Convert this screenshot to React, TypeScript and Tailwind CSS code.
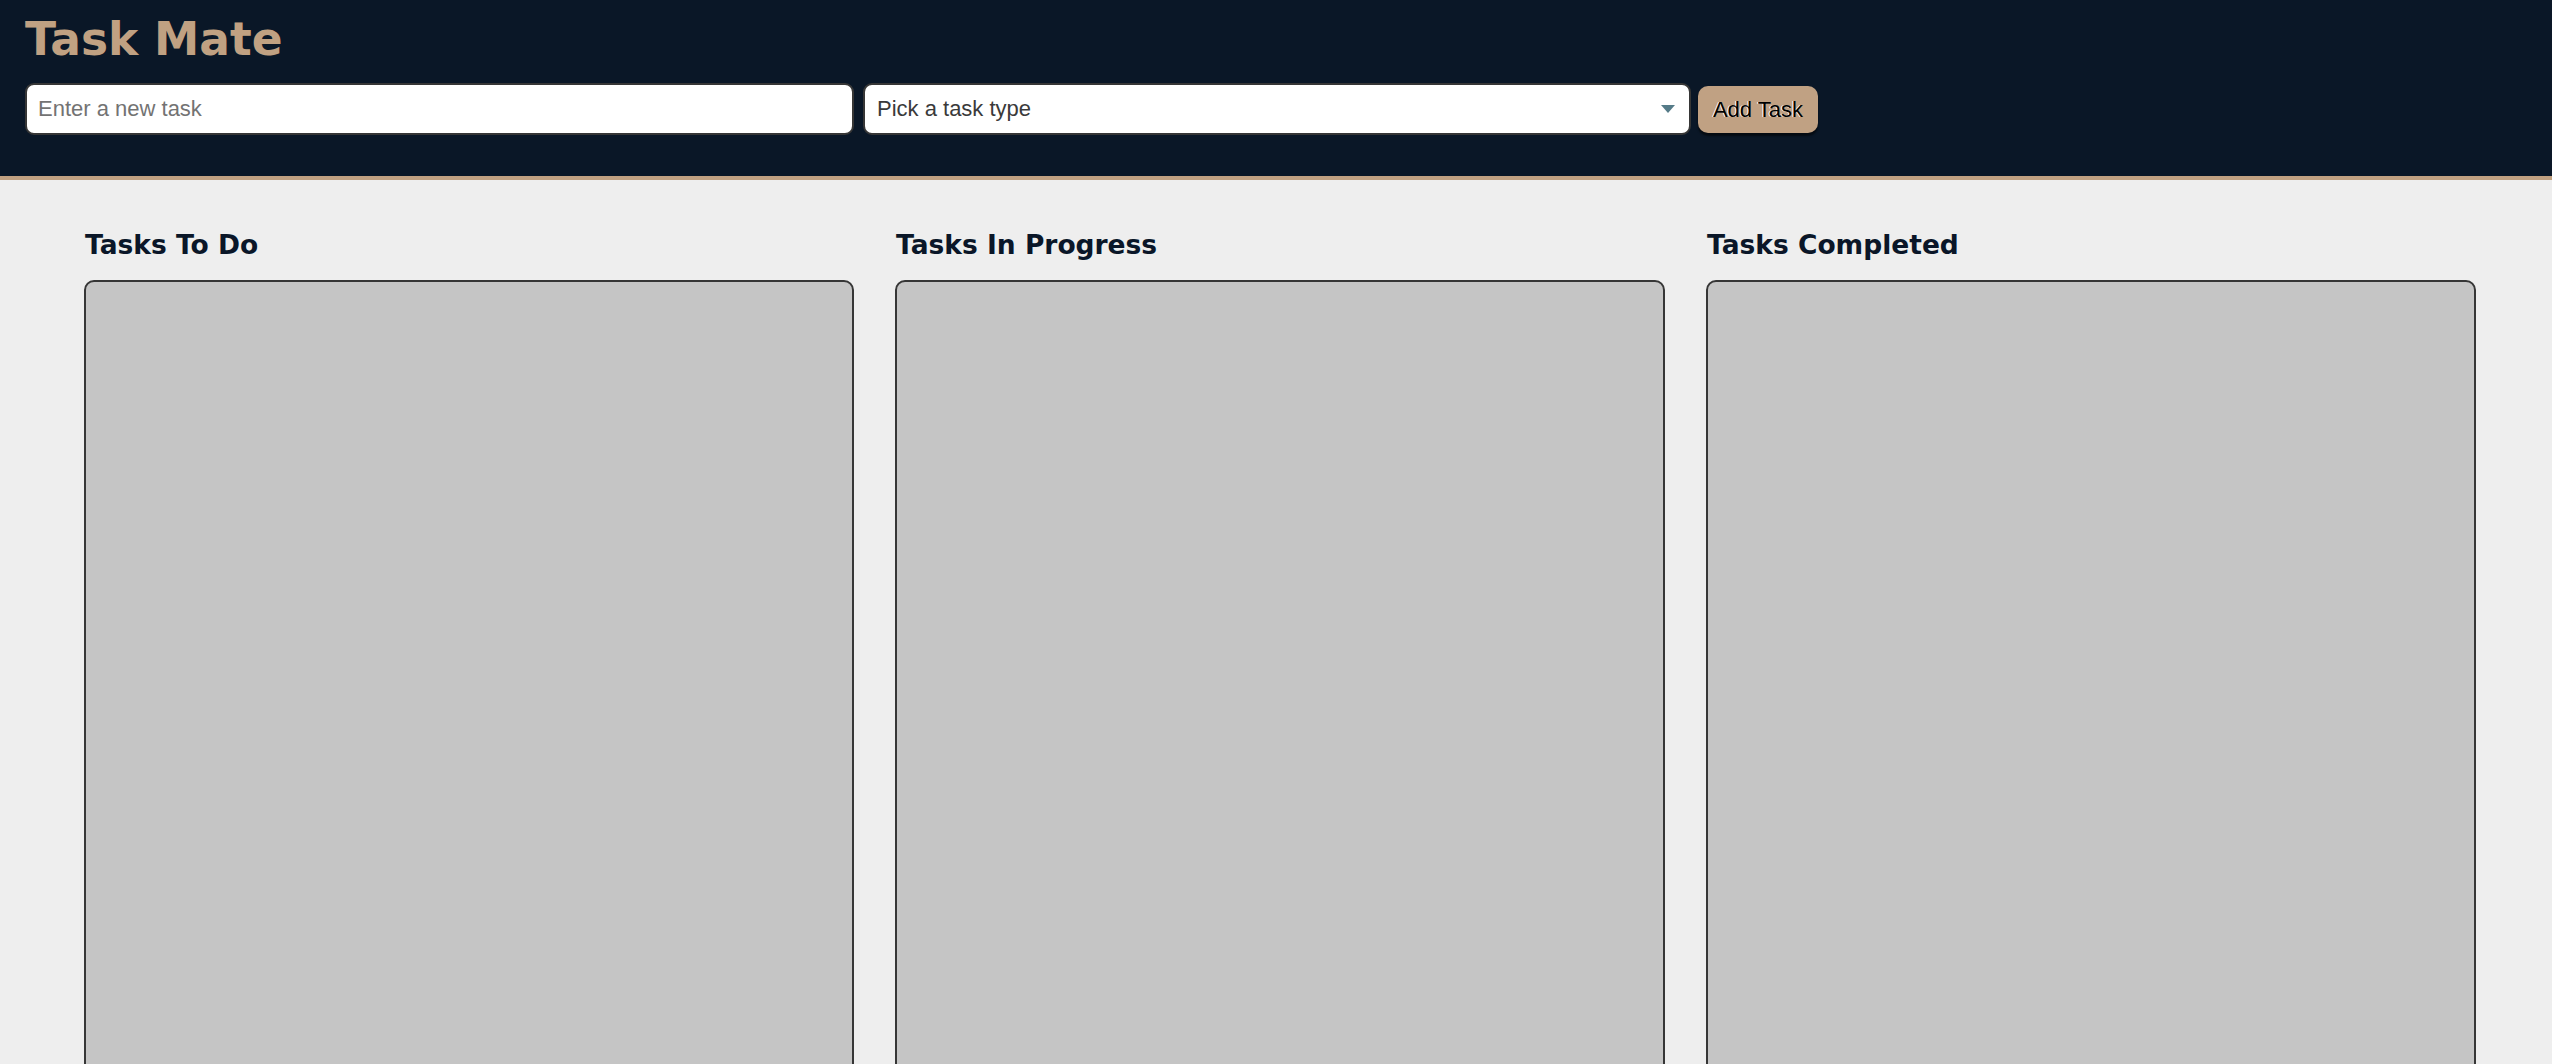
import React from "react";

const sans = { fontFamily: '"Liberation Sans", Arial, sans-serif' };
const verdana = { fontFamily: '"DejaVu Sans", Verdana, sans-serif' };

function Column({ title }: { title: string }) {
  return (
    <section className="flex flex-col">
      <h2
        className="text-[26.5px] font-bold leading-none text-[#0a1628] pl-px"
        style={verdana}
      >
        {title}
      </h2>
      <div className="mt-[22px] h-[900px] rounded-[10px] border-2 border-[#363636] bg-[#c5c5c5]" />
    </section>
  );
}

export default function App() {
  return (
    <div className="min-h-screen bg-[#eeeeee]">
      <header className="border-b-4 border-[#c0a182] bg-[#0a1727] pl-[25px] pt-[17px] pb-[41px]">
        <h1
          className="text-[45.5px] font-bold leading-none text-[#c0a182]"
          style={verdana}
        >
          Task Mate
        </h1>
        <div className="mt-[20px] flex items-center" style={sans}>
          <input
            type="text"
            placeholder="Enter a new task"
            className="h-[52px] w-[829px] rounded-[9px] border-2 border-[#363636] bg-white pl-[11px] text-[22px] text-[#333] outline-none placeholder:text-[#737373]"
            style={sans}
          />
          <div className="ml-[9px] flex h-[52px] w-[828px] items-center justify-between rounded-[9px] border-2 border-[#363636] bg-white pl-[12px] pr-[14px] text-[22px] text-[#3a3a3a]">
            <span>Pick a task type</span>
            <svg width="14" height="8" viewBox="0 0 14 8">
              <polygon points="0,0 14,0 7,8" fill="#557b88" />
            </svg>
          </div>
          <button
            className="ml-[7px] mt-px h-[47px] w-[120px] rounded-[10px] bg-[#c0a183] text-[22px] text-black shadow-[0_3px_2px_rgba(0,0,0,0.55)] [text-shadow:-1px_0_0_#fff]"
            style={sans}
          >
            Add Task
          </button>
        </div>
      </header>
      <main className="grid grid-cols-3 gap-[41px] pl-[84px] pr-[76px] pt-[52px]">
        <Column title="Tasks To Do" />
        <Column title="Tasks In Progress" />
        <Column title="Tasks Completed" />
      </main>
    </div>
  );
}
